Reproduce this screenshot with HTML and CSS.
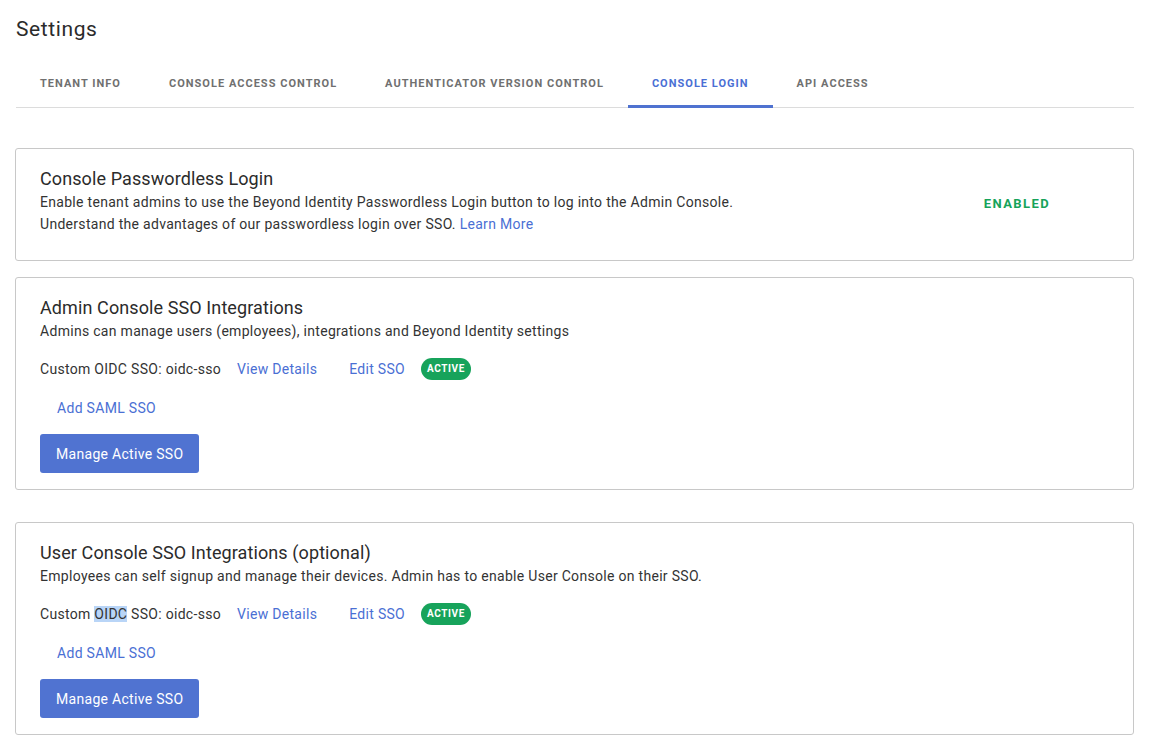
FILE: index.html
```html
<!DOCTYPE html>
<html>
<head>
<meta charset="utf-8">
<link rel="stylesheet" href="styles.css">
</head>
<body>
<div class="page">
  <h1 class="title">Settings</h1>
  <nav class="tabs">
    <a class="tab">Tenant Info</a>
    <a class="tab">Console Access Control</a>
    <a class="tab">Authenticator Version Control</a>
    <a class="tab active">Console Login</a>
    <a class="tab">API Access</a>
  </nav>

  <section class="card card-first">
    <div class="card-split">
      <div>
        <h2 class="card-title">Console Passwordless Login</h2>
        <p class="desc">Enable tenant admins to use the Beyond Identity Passwordless Login button to log into the Admin Console.</p>
        <p class="desc">Understand the advantages of our passwordless login over SSO. <a class="link">Learn More</a></p>
      </div>
      <div class="status">ENABLED</div>
    </div>
  </section>

  <section class="card card-second">
    <h2 class="card-title">Admin Console SSO Integrations</h2>
    <p class="desc">Admins can manage users (employees), integrations and Beyond Identity settings</p>
    <div class="sso-row">
      <span class="sso-name">Custom OIDC SSO: oidc-sso</span>
      <a class="text-btn">View Details</a>
      <a class="text-btn">Edit SSO</a>
      <span class="badge">ACTIVE</span>
    </div>
    <div class="add-row"><a class="text-btn add">Add SAML SSO</a></div>
    <button class="primary">Manage Active SSO</button>
  </section>

  <section class="card card-third">
    <h2 class="card-title">User Console SSO Integrations (optional)</h2>
    <p class="desc">Employees can self signup and manage their devices. Admin has to enable User Console on their SSO.</p>
    <div class="sso-row">
      <span class="sso-name">Custom <span class="sel">OIDC</span> SSO: oidc-sso</span>
      <a class="text-btn">View Details</a>
      <a class="text-btn">Edit SSO</a>
      <span class="badge">ACTIVE</span>
    </div>
    <div class="add-row"><a class="text-btn add">Add SAML SSO</a></div>
    <button class="primary">Manage Active SSO</button>
  </section>
</div>
</body>
</html>
```

FILE: styles.css
```css
* { box-sizing: border-box; }
body {
  margin: 0;
  background: #fff;
  font-family: Roboto, "Liberation Sans", sans-serif;
  color: #2f2f2f;
}
.page {
  padding: 15px 15px 0 15px;
}
.title {
  margin: 0 0 0 1px;
  font-size: 21px;
  line-height: 28px;
  font-weight: 400;
  letter-spacing: 0.6px;
  color: #2b2b2b;
}
.tabs {
  display: flex;
  margin: 18px 0 0 1px;
  border-bottom: 1px solid #dcdcdc;
}
.tab {
  display: block;
  height: 47px;
  line-height: 46px;
  padding: 0 24px;
  font-size: 11px;
  font-weight: 700;
  letter-spacing: 1.02px;
  text-transform: uppercase;
  color: #707070;
  border-bottom: 3px solid transparent;
  margin-bottom: -1px;
}
.tab.active {
  color: #4a6fd4;
  border-bottom-color: #4f72d0;
}
.card {
  border: 1px solid #c8c8c8;
  border-radius: 3px;
  padding: 18px 24px 16px 24px;
}
.card-first { margin-top: 40px; padding-bottom: 25px; }
.card-second { margin-top: 16px; }
.card-third { margin-top: 32px; }
.card-split {
  display: flex;
  justify-content: space-between;
  align-items: center;
}
.card-title {
  margin: 0;
  font-size: 18px;
  line-height: 24px;
  font-weight: 400;
  letter-spacing: 0.1px;
  color: #2b2b2b;
}
.desc {
  margin: 0;
  font-size: 14px;
  line-height: 22px;
  letter-spacing: 0.3px;
  color: #333;
}
.link { color: #4a6fd4; }
.status {
  margin-right: 59px;
  margin-top: 5px;
  font-size: 13px;
  font-weight: 700;
  letter-spacing: 1.4px;
  color: #16a35a;
}
.sso-row {
  display: flex;
  align-items: center;
  height: 36px;
  margin-top: 9px;
  font-size: 14px;
  letter-spacing: 0.3px;
}
.sso-name { color: #333; }
.sel { background: #b9d5f7; }
.text-btn {
  display: inline-block;
  padding: 0 16px;
  line-height: 36px;
  color: #4a6fd4;
  font-size: 14px;
  letter-spacing: 0.3px;
}
.add-row { margin-top: 3px; height: 36px; }
.text-btn.add { padding-left: 17px; }
.badge {
  display: inline-block;
  height: 22px;
  line-height: 22px;
  padding: 0 6px;
  border-radius: 11px;
  background: #17a35b;
  color: #fff;
  font-size: 10px;
  font-weight: 700;
  letter-spacing: 0.6px;
}
.primary {
  display: block;
  margin-top: 8px;
  height: 39px;
  padding: 0 16px;
  border: none;
  border-radius: 3px;
  background: #5073d1;
  color: #fff;
  font-family: inherit;
  font-size: 14px;
  letter-spacing: 0.3px;
}
```
